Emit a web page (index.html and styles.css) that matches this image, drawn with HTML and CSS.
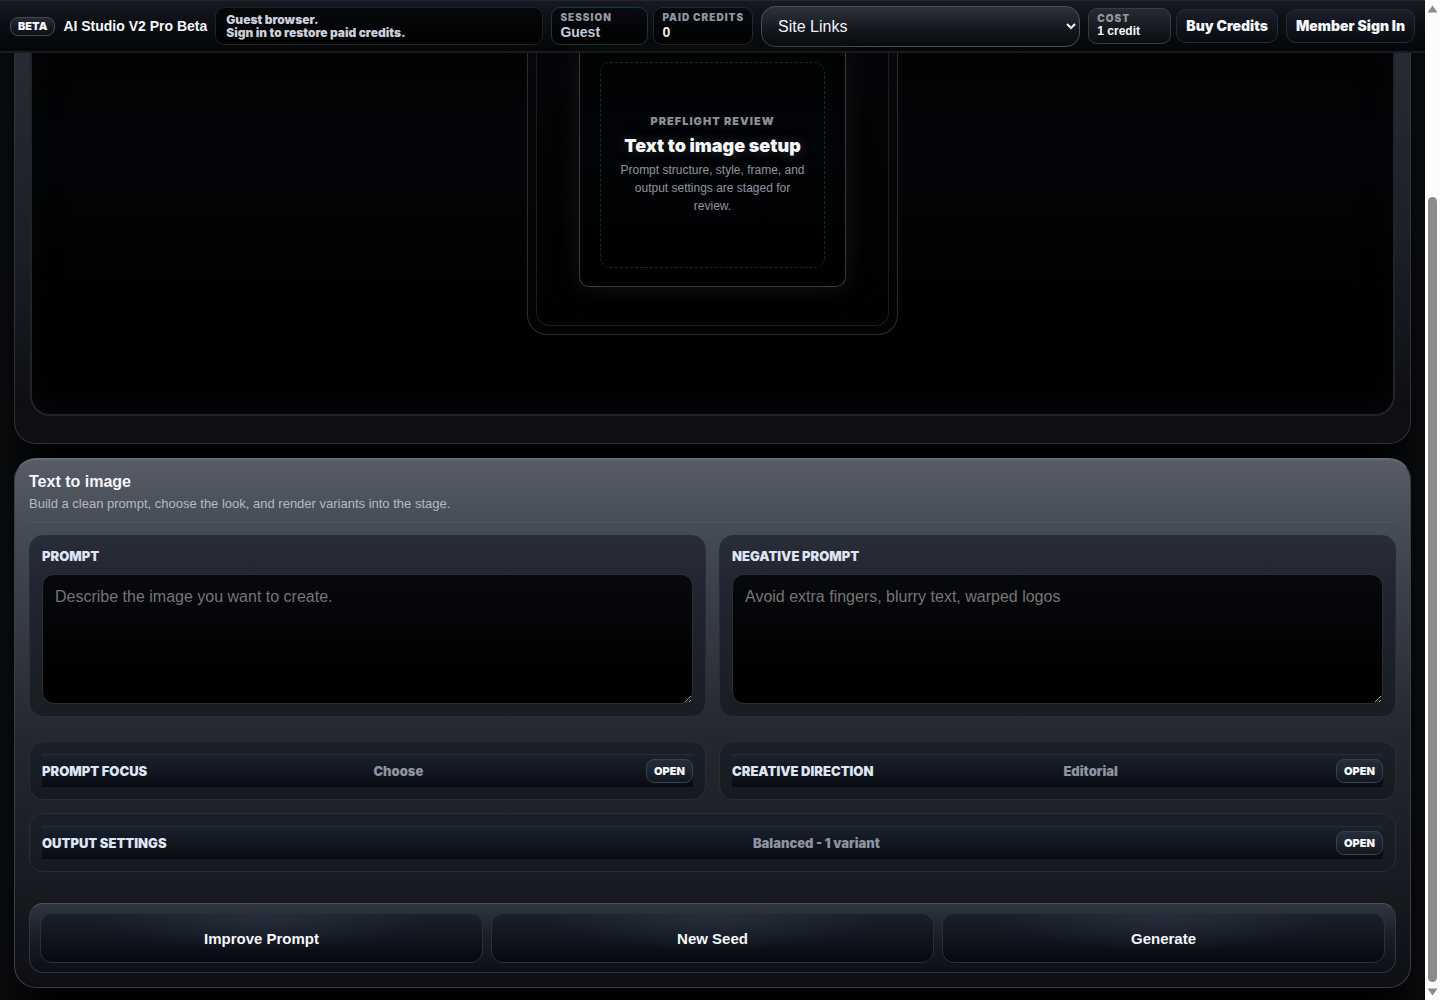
FILE: index.html
```html
<!DOCTYPE html>
<html lang="en">
<head>
<meta charset="utf-8">
<meta name="viewport" content="width=device-width, initial-scale=1">
<title>AI Studio V2 Pro Beta</title>
<link rel="stylesheet" href="styles.css">
</head>
<body>
<div class="app">
  <header class="topbar">
    <div class="brand">
      <span class="beta">BETA</span>
      <strong class="brand-name">AI Studio V2 Pro Beta</strong>
    </div>
    <p class="notice">Guest browser.<br>Sign in to restore paid credits.</p>
    <div class="stats">
      <div class="stat stat-session"><span class="stat-label">SESSION</span><span class="stat-value muted">Guest</span></div>
      <div class="stat"><span class="stat-label">PAID CREDITS</span><span class="stat-value">0</span></div>
    </div>
    <select class="links" aria-label="Site Links"><option>Site Links</option></select>
    <div class="cost-group">
      <div class="cost"><span class="stat-label">COST</span><span class="cost-value">1 credit</span></div>
      <button class="top-button" type="button">Buy Credits</button>
    </div>
    <button class="top-button" type="button">Member Sign In</button>
  </header>

  <main class="content">
    <section class="stage-panel" aria-label="Stage">
      <div class="stage">
        <div class="frame">
          <div class="frame-inner">
            <div class="sheet">
              <div class="preflight">
                <span class="eyebrow">PREFLIGHT REVIEW</span>
                <h2 class="preflight-title">Text to image setup</h2>
                <p class="preflight-text">Prompt structure, style, frame, and output settings are staged for review.</p>
              </div>
            </div>
          </div>
        </div>
      </div>
    </section>

    <section class="console">
      <div class="console-head">
        <h1 class="console-title">Text to image</h1>
        <p class="console-text">Build a clean prompt, choose the look, and render variants into the stage.</p>
      </div>
      <div class="fields">
        <div class="card field">
          <label class="label" for="prompt">PROMPT</label>
          <textarea class="text" id="prompt" placeholder="Describe the image you want to create."></textarea>
        </div>
        <div class="card field">
          <label class="label" for="negative">NEGATIVE PROMPT</label>
          <textarea class="text" id="negative" placeholder="Avoid extra fingers, blurry text, warped logos"></textarea>
        </div>
      </div>
      <div class="options">
        <details class="card"><summary class="summary"><span class="label">PROMPT FOCUS</span><span class="choice">Choose</span><span class="open">OPEN</span></summary></details>
        <details class="card"><summary class="summary"><span class="label">CREATIVE DIRECTION</span><span class="choice">Editorial</span><span class="open">OPEN</span></summary></details>
        <details class="card wide"><summary class="summary"><span class="label">OUTPUT SETTINGS</span><span class="choice">Balanced - 1 variant</span><span class="open">OPEN</span></summary></details>
      </div>
      <div class="actions">
        <button class="action" type="button">Improve Prompt</button>
        <button class="action" type="button">New Seed</button>
        <button class="action" type="button">Generate</button>
      </div>
    </section>
  </main>
</div>
<div class="scroll" aria-hidden="true">
  <svg class="arrow" viewBox="0 0 11 8"><path d="M5.5 0.5 10.5 7.5H0.5Z"/></svg>
  <div class="track"><div class="thumb"></div></div>
  <svg class="arrow" viewBox="0 0 11 8"><path d="M5.5 7.5 10.5 0.5H0.5Z"/></svg>
</div>
</body>
</html>
```
FILE: styles.css
```css
* { box-sizing: border-box; }
html { background: #000; }
body {
  margin: 0;
  min-height: 100vh;
  display: flex;
  background: #020304;
  color: #f5f7fb;
  font-family: "Liberation Sans", Arial, sans-serif;
  font-size: 13px;
}
h1, h2, p { margin: 0; }
button, select, textarea { font-family: inherit; color: inherit; }

.app {
  flex: 1;
  min-width: 0;
  display: flex;
  flex-direction: column;
  background: linear-gradient(90deg, #080a0b, #000 60px, #000 calc(100% - 60px), #080a0b);
}

/* Top bar */
.topbar {
  display: flex;
  align-items: center;
  gap: 8px;
  height: 53px;
  padding: 0 10px;
  border-top: 1px solid #24282e;
  border-bottom: 2px solid #191b1e;
  background: linear-gradient(#151921, #0b0e12 50%, #040608);
}
.brand { display: flex; align-items: center; gap: 8px; }
.beta {
  padding: 0 7px;
  border: 1px solid #454a53;
  border-radius: 8px;
  background: linear-gradient(#252a32, #0c0f14);
  font: 900 11px/17px Inter, sans-serif;
}
.brand-name { font-size: 14px; white-space: nowrap; }
.notice {
  flex: 333 1 0;
  min-width: 0;
  height: 38px;
  padding: 5px 10px;
  border: 1px solid #202226;
  border-radius: 9px;
  background: linear-gradient(#06080b, #000);
  color: #c9d0db;
  font: 900 12px/13px Inter, sans-serif;
}
.stats, .cost-group { display: flex; align-items: center; gap: 5px; }
.stat, .cost {
  display: flex;
  flex-direction: column;
  height: 38px;
  padding: 3px 8px;
  border: 1px solid #24272b;
  border-radius: 9px;
  background: linear-gradient(#090b10, #000);
}
.stat { min-width: 97px; }
.stat-session { border-color: #163c2f; }
.stat-label {
  color: #9298a2;
  font: 900 10px/13px Inter, sans-serif;
  letter-spacing: 1px;
  white-space: nowrap;
}
.stat-value { font-size: 14px; font-weight: 700; line-height: 16px; }
.muted { color: #c9d0db; }
.links {
  flex: 319 1 0;
  min-width: 0;
  height: 41px;
  padding: 0 12px;
  border: 1px solid #4a4f57;
  border-radius: 14px;
  background: linear-gradient(#2e333c, #15191f 55%, #080b0e);
  font-size: 16px;
}
.cost {
  width: 83px;
  height: 36px;
  border-color: #383c43;
  background: linear-gradient(#262b33, #0a0d11);
}
.cost-value { font-size: 12px; font-weight: 700; line-height: 12px; }
.top-button {
  height: 34px;
  padding: 0 9px;
  border: 1px solid #262c34;
  border-radius: 10px;
  background: linear-gradient(#1a1f2a, #080b11);
  font: 900 14px/16px Inter, sans-serif;
  white-space: nowrap;
}

/* Stage */
.content { display: flex; flex-direction: column; gap: 14px; padding: 0 14px 12px; }
.stage-panel {
  padding: 0 15px 27px;
  border: 1px solid #30343a;
  border-top: 0;
  border-radius: 0 0 22px 22px;
  background: linear-gradient(#272b33, #1b1f26 50%, #0d0f13 90%, #0e1014);
}
.stage {
  display: flex;
  justify-content: center;
  padding-bottom: 79px;
  border: 2px solid #202327;
  border-top: 0;
  border-radius: 0 0 20px 20px;
  background: linear-gradient(#020305, #030508 30%, #000 75%);
  box-shadow: inset 0 -10px 30px #050709;
}
.frame {
  width: 371px;
  padding: 0 8px 8px;
  border: 1px solid #2a2c30;
  border-top: 0;
  border-radius: 0 0 20px 20px;
  background: linear-gradient(#06080b, #020303);
}
.frame-inner {
  display: flex;
  justify-content: center;
  padding-bottom: 38px;
  border: 1px solid #1b1d21;
  border-top: 0;
  border-radius: 0 0 14px 14px;
  background: linear-gradient(#030508, #010101);
}
.sheet {
  width: 267px;
  padding: 9px 20px 18px;
  border: 1px solid #3a3b3d;
  border-top: 0;
  border-radius: 0 0 10px 10px;
  background: linear-gradient(#010204, #020407 40%, #000 90%);
  box-shadow: 0 0 24px #141517;
}
.preflight {
  display: flex;
  flex-direction: column;
  align-items: center;
  height: 206px;
  padding: 51px 16px 0;
  border: 1px dashed #07301f;
  border-radius: 10px;
  text-align: center;
}
.eyebrow {
  color: #8c9199;
  font: 900 11px/14px Inter, sans-serif;
  letter-spacing: 1px;
  white-space: nowrap;
}
.preflight-title {
  padding: 8px 0 5px;
  font: 900 18px/20px Inter, sans-serif;
  text-shadow: 0 0 12px #333;
  white-space: nowrap;
}
.preflight-text { color: #8f949e; font-size: 12px; line-height: 18px; }

/* Console */
.console {
  padding: 14px;
  border: 1px solid #3a3f45;
  border-top: 2px solid #666b72;
  border-radius: 22px;
  background: linear-gradient(#575c66, #484e58 11%, #3b414a 24%, #252932 50%, #191c22 78%, #0d0f13);
}
.console-head {
  height: 49px;
  border-bottom: 1px solid #50565f;
}
.console-title { font-size: 16px; line-height: 16px; }
.console-text { padding-top: 5px; color: #b4bac5; font-size: 13px; line-height: 18px; }
.fields, .options { display: grid; grid-template-columns: 1fr 1fr; gap: 13px; }
.fields { padding-top: 12px; }
.options { padding: 24px 0 31px; }
.wide { grid-column: 1 / -1; }
.card {
  min-width: 0;
  padding: 12px;
  border: 1px solid #292e36;
  border-radius: 14px;
  background: linear-gradient(#1b1f28, #161a20);
}
.field {
  display: flex;
  flex-direction: column;
  gap: 10px;
  background: linear-gradient(#292d37, #202531 30%, #191d23);
}
.label {
  color: #dfe5f3;
  font: 900 13px/16px Inter, sans-serif;
  white-space: nowrap;
}
.text {
  width: 100%;
  height: 130px;
  padding: 12px;
  border: 1px solid #2b2d31;
  border-radius: 12px;
  background: linear-gradient(#07090d, #000 85%);
  font-size: 16px;
  line-height: 20px;
  resize: both;
}
.text::placeholder { color: #757575; }
.summary {
  display: grid;
  grid-template-columns: 11fr 9fr auto;
  align-items: center;
  gap: 8px;
  height: 33px;
  border-top: 1px solid #252c37;
  background: linear-gradient(#1b222e, #070b13);
  list-style: none;
}
.choice { color: #8d939f; font: 900 13px/16px Inter, sans-serif; }
.open {
  padding: 0 7px;
  border: 1px solid #39414d;
  border-radius: 8px;
  background: linear-gradient(#272e3b, #121822);
  font: 900 11px/22px Inter, sans-serif;
}
.actions {
  display: grid;
  grid-template-columns: repeat(3, 1fr);
  gap: 8px;
  padding: 9px 10px;
  border: 1px solid #30353c;
  border-top-color: #4c5259;
  border-radius: 14px;
  background: linear-gradient(#303640, #1a1f28 45%, #0c0f14);
}
.action {
  height: 50px;
  border: 1px solid #2b3038;
  border-radius: 12px;
  background:
    radial-gradient(ellipse at 50% 0, #262d3a 0, transparent 55%),
    linear-gradient(#1a202a, #060911);
  font-size: 15px;
  font-weight: 700;
}

/* Scroll rail */
.scroll {
  display: flex;
  flex-direction: column;
  align-items: center;
  flex: 0 0 15px;
  padding: 5px 0 4px;
  background: #fcfcfc;
}
.arrow { width: 11px; height: 8px; fill: #8b8b8b; }
.track { flex: 1; display: flex; flex-direction: column; justify-content: flex-end; padding-bottom: 6px; }
.thumb { width: 9px; height: 81%; border-radius: 5px; background: #8b8b8b; }
```
